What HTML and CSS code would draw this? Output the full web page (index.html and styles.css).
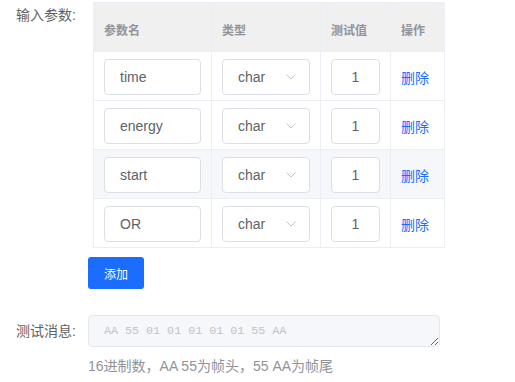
FILE: index.html
```html
<!DOCTYPE html>
<html lang="zh-CN">

<head>
    <meta charset="UTF-8">
    <meta name="viewport" content="width=device-width, initial-scale=1.0">
    <title>测试参数</title>
    <link rel="stylesheet" href="styles.css">
</head>

<body>
    <div class="form">
        <!-- 输入参数 -->
        <div class="form-item">
            <label class="form-label label-top">输入参数:</label>
            <div class="form-content">
                <table class="param-table">
                    <colgroup>
                        <col style="width: 118px">
                        <col style="width: 109px">
                        <col style="width: 70px">
                        <col style="width: 54px">
                    </colgroup>
                    <thead>
                        <tr>
                            <th>参数名</th>
                            <th>类型</th>
                            <th>测试值</th>
                            <th>操作</th>
                        </tr>
                    </thead>
                    <tbody>
                        <tr>
                            <td><input class="text-input" type="text" value="time"></td>
                            <td>
                                <div class="select">
                                    <span>char</span>
                                    <svg class="arrow" width="10" height="6" viewBox="0 0 10 6"><path d="M0.5 0.5 L5 5 L9.5 0.5" fill="none" stroke="#c0c4cc" stroke-width="1"/></svg>
                                </div>
                            </td>
                            <td><input class="text-input value-input" type="text" value="1"></td>
                            <td><a class="link" href="#">删除</a></td>
                        </tr>
                        <tr>
                            <td><input class="text-input" type="text" value="energy"></td>
                            <td>
                                <div class="select">
                                    <span>char</span>
                                    <svg class="arrow" width="10" height="6" viewBox="0 0 10 6"><path d="M0.5 0.5 L5 5 L9.5 0.5" fill="none" stroke="#c0c4cc" stroke-width="1"/></svg>
                                </div>
                            </td>
                            <td><input class="text-input value-input" type="text" value="1"></td>
                            <td><a class="link" href="#">删除</a></td>
                        </tr>
                        <tr class="row-hover">
                            <td><input class="text-input" type="text" value="start"></td>
                            <td>
                                <div class="select">
                                    <span>char</span>
                                    <svg class="arrow" width="10" height="6" viewBox="0 0 10 6"><path d="M0.5 0.5 L5 5 L9.5 0.5" fill="none" stroke="#c0c4cc" stroke-width="1"/></svg>
                                </div>
                            </td>
                            <td><input class="text-input value-input" type="text" value="1"></td>
                            <td><a class="link" href="#">删除</a></td>
                        </tr>
                        <tr>
                            <td><input class="text-input" type="text" value="OR"></td>
                            <td>
                                <div class="select">
                                    <span>char</span>
                                    <svg class="arrow" width="10" height="6" viewBox="0 0 10 6"><path d="M0.5 0.5 L5 5 L9.5 0.5" fill="none" stroke="#c0c4cc" stroke-width="1"/></svg>
                                </div>
                            </td>
                            <td><input class="text-input value-input" type="text" value="1"></td>
                            <td><a class="link" href="#">删除</a></td>
                        </tr>
                    </tbody>
                </table>
                <button class="btn-primary" type="button">添加</button>
            </div>
        </div>

        <!-- 测试消息 -->
        <div class="form-item msg-item">
            <label class="form-label">测试消息:</label>
            <div class="form-content">
                <textarea class="msg-input" rows="1" disabled placeholder="AA 55 01 01 01 01 01 55 AA"></textarea>
                <div class="hint">16进制数，AA 55为帧头，55 AA为帧尾</div>
            </div>
        </div>
    </div>
</body>

</html>
```

FILE: styles.css
```css
body {
    margin: 0;
    padding: 0;
    font-family: "Liberation Sans", Arial, "Noto Sans CJK SC", sans-serif;
    font-size: 14px;
    color: #606266;
    background-color: #fff;
}

.form-item {
    display: flex;
}

.form-label {
    width: 76px;
    padding-right: 12px;
    text-align: right;
    line-height: 32px;
    color: #606266;
    flex-shrink: 0;
}

.label-top {
    line-height: 30px;
}

.form-content {
    flex: 1;
}

.param-table {
    margin: 2px 0 0 5px;
    border-collapse: collapse;
    table-layout: fixed;
    width: 351px;
}

.param-table th,
.param-table td {
    border: 1px solid #ebeef5;
    text-align: left;
    padding: 0 10px;
    box-sizing: border-box;
}

.param-table th {
    height: 49px;
    padding-top: 4px;
    background-color: #f0f0f0;
    color: #909399;
    font-size: 12px;
    font-weight: bold;
}

.param-table td {
    height: 49px;
    padding-top: 1px;
}

.row-hover td {
    background-color: #f5f7fa;
}

.text-input {
    display: block;
    width: 100%;
    height: 36px;
    box-sizing: border-box;
    padding: 0 15px;
    border: 1px solid #dcdfe6;
    border-radius: 4px;
    background-color: #fff;
    font-family: inherit;
    font-size: 14px;
    color: #606266;
    outline: none;
}

.value-input {
    padding: 0 4px;
    text-align: center;
}

.select {
    display: flex;
    align-items: center;
    justify-content: space-between;
    height: 36px;
    box-sizing: border-box;
    padding: 0 13px 0 15px;
    border: 1px solid #dcdfe6;
    border-radius: 4px;
    background-color: #fff;
}

.arrow {
    display: block;
    margin-top: 1px;
}

.link {
    color: #1a6dff;
    text-decoration: none;
}

.btn-primary {
    display: block;
    margin-top: 9px;
    width: 56px;
    height: 32px;
    border: none;
    border-radius: 3px;
    background-color: #1a6dff;
    color: #fff;
    font-family: inherit;
    font-size: 12px;
    cursor: pointer;
}

.msg-item {
    margin-top: 26px;
}

.msg-input {
    display: block;
    width: 352px;
    height: 32px;
    box-sizing: border-box;
    padding: 5px 15px;
    border: 1px solid #e4e7ed;
    border-radius: 4px;
    background-color: #f5f7fa;
    font-family: "Liberation Mono", monospace;
    font-size: 11.7px;
    line-height: 20px;
    color: #c0c4cc;
    resize: vertical;
}

.msg-input::placeholder {
    color: #c0c4cc;
}

.hint {
    margin-top: 7px;
    line-height: 24px;
    color: #909399;
}
```
